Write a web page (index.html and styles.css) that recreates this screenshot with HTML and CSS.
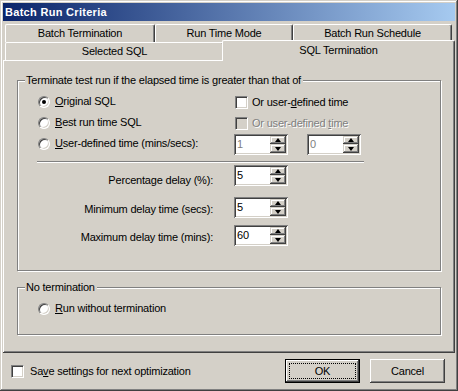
FILE: index.html
```html
<!DOCTYPE html>
<html>
<head>
<meta charset="utf-8">
<title>Batch Run Criteria</title>
<link rel="stylesheet" href="styles.css">
</head>
<body>
<div class="window">
  <div class="titlebar">Batch Run Criteria</div>
  <div class="tabs">
    <div class="tabrow">
      <div class="tab t-batch">Batch Termination</div>
      <div class="tab t-mode">Run Time Mode</div>
      <div class="tab t-sched">Batch Run Schedule</div>
    </div>
    <div class="tabrow">
      <div class="tab t-sql">Selected SQL</div>
      <div class="tab t-term active">SQL Termination</div>
    </div>
  </div>
  <div class="panel">
    <div class="group g-term">
      <span class="group-title">Terminate test run if the elapsed time is greater than that of</span>
      <div class="opt-row">
        <div class="cell1"><span class="opt"><span class="radio checked"></span><span><u>O</u>riginal SQL</span></span></div>
        <div class="cell2"><span class="opt opt-c"><span class="check"></span><span>Or user-<u>d</u>efined time</span></span></div>
      </div>
      <div class="opt-row">
        <div class="cell1"><span class="opt"><span class="radio"></span><span><u>B</u>est run time SQL</span></span></div>
        <div class="cell2"><span class="opt opt-c"><span class="check disabled"></span><span class="dis">Or user-defined <u>t</u>ime</span></span></div>
      </div>
      <div class="opt-row">
        <div class="cell1"><span class="opt"><span class="radio"></span><span><u>U</u>ser-defined time (mins/secs):</span></span></div>
        <div class="cell2 spins">
          <div class="spin"><span class="spin-val dis-val">1</span><span class="spin-btns"><span class="spin-up"><i class="arrow-up"></i></span><span class="spin-down"><i class="arrow-down"></i></span></span></div>
          <div class="spin"><span class="spin-val dis-val">0</span><span class="spin-btns"><span class="spin-up"><i class="arrow-up"></i></span><span class="spin-down"><i class="arrow-down"></i></span></span></div>
        </div>
      </div>
      <div class="sep"></div>
      <div class="field f1">
        <span class="field-label fl1">Percentage delay (%):</span>
        <div class="spin"><span class="spin-val">5</span><span class="spin-btns"><span class="spin-up"><i class="arrow-up"></i></span><span class="spin-down"><i class="arrow-down"></i></span></span></div>
      </div>
      <div class="field f2">
        <span class="field-label">Minimum delay time (secs):</span>
        <div class="spin"><span class="spin-val">5</span><span class="spin-btns"><span class="spin-up"><i class="arrow-up"></i></span><span class="spin-down"><i class="arrow-down"></i></span></span></div>
      </div>
      <div class="field f3">
        <span class="field-label">Maximum delay time (mins):</span>
        <div class="spin"><span class="spin-val">60</span><span class="spin-btns"><span class="spin-up"><i class="arrow-up"></i></span><span class="spin-down"><i class="arrow-down"></i></span></span></div>
      </div>
    </div>
    <div class="group g-none">
      <span class="group-title">No termination</span>
      <div class="opt-row">
        <span class="opt"><span class="radio"></span><span><u>R</u>un without termination</span></span>
      </div>
    </div>
  </div>
  <div class="footer">
    <span class="opt opt-save"><span class="check"></span><span>Sa<u>v</u>e settings for next optimization</span></span>
    <div class="buttons">
      <button class="btn default"><span class="focus">OK</span></button>
      <button class="btn">Cancel</button>
    </div>
  </div>
</div>
</body>
</html>
```
FILE: styles.css
```css
* { box-sizing: border-box; }
html, body { margin: 0; padding: 0; }
body {
  background: #D4D0C8;
  font-family: "Liberation Sans", Arial, sans-serif;
  font-size: 11px;
  color: #000;
  letter-spacing: -0.2px;
}
u { text-decoration: underline; text-underline-offset: 1px; }

.window {
  width: 458px;
  height: 391px;
  padding: 3px;
  display: flex;
  flex-direction: column;
  background: #D4D0C8;
  box-shadow: inset -1px -1px #404040, inset 1px 1px #D4D0C8, inset -2px -2px #808080, inset 2px 2px #fff;
}
.titlebar {
  height: 18px;
  flex: none;
  background: linear-gradient(to right, #0A246A, #A6CAF0);
  color: #fff;
  font-weight: bold;
  line-height: 18px;
  padding-left: 2px;
  letter-spacing: 0.3px;
}

.tabs { margin-top: 3px; flex: none; }
.tabrow { display: flex; height: 18px; padding-left: 2px; }
.tab {
  height: 18px;
  line-height: 17px;
  text-align: center;
  white-space: nowrap;
  background: #D4D0C8;
  border-top: 1px solid #fff;
  border-left: 1px solid #fff;
  border-right: 1px solid #404040;
  border-radius: 2px 2px 0 0;
  box-shadow: inset -1px 0 #808080;
  flex: none;
}
.t-batch { width: 150px; }
.t-mode { width: 138px; }
.t-sched { width: 159px; }
.t-sql { width: 219px; }
.t-term { width: 233px; }
.tab.active {
  height: 21px;
  margin-top: -2px;
  margin-left: -2px;
  line-height: 19px;
  position: relative;
  z-index: 1;
}

.panel {
  height: 293px;
  flex: none;
  padding: 2px;
  box-shadow: inset -1px -1px #404040, inset 1px 1px #fff, inset -2px -2px #808080;
}

.group {
  position: relative;
  margin-left: 12px;
  width: 424px;
  border: 1px solid #808080;
  box-shadow: inset 1px 1px #fff, 1px 1px #fff;
}
.g-term { margin-top: 18px; height: 191px; padding: 11px 0 0 20px; }
.g-none { margin-top: 16px; height: 48px; padding: 10px 0 0 20px; }
.group-title {
  position: absolute;
  top: -7px;
  left: 7px;
  padding: 0 2px 0 1px;
  background: #D4D0C8;
  line-height: 13px;
  white-space: nowrap;
}

.opt-row { display: flex; align-items: center; height: 21px; }
.cell1 { width: 196px; flex: none; }
.cell2 { display: flex; align-items: center; }
.spins { gap: 19px; }
.opt { display: inline-flex; align-items: center; gap: 5px; line-height: 13px; white-space: nowrap; }
.opt-c { margin-left: 1px; gap: 4px; }
.dis { color: #808080; text-shadow: 1px 1px #fff; }

.radio {
  position: relative;
  flex: none;
  width: 12px;
  height: 12px;
  border-radius: 50%;
  background: #fff;
  border: 1px solid;
  border-color: #808080 #fff #fff #808080;
  box-shadow: inset 1px 1px #404040, inset -1px -1px #D4D0C8;
}
.radio.checked::after {
  content: "";
  position: absolute;
  left: 3px;
  top: 3px;
  width: 4px;
  height: 4px;
  border-radius: 50%;
  background: #000;
}
.check {
  flex: none;
  width: 13px;
  height: 13px;
  background: #fff;
  border: 1px solid;
  border-color: #808080 #fff #fff #808080;
  box-shadow: inset 1px 1px #404040, inset -1px -1px #D4D0C8;
}
.check.disabled { background: #D4D0C8; }

.sep {
  margin: 6px 0 0 -1px;
  width: 327px;
  height: 2px;
  border-top: 1px solid #808080;
  border-bottom: 1px solid #fff;
}

.field { display: flex; height: 21px; }
.f1 { margin-top: 2px; }
.f2 { margin-top: 11px; }
.f3 { margin-top: 7px; }
.field-label {
  width: 175px;
  margin-right: 21px;
  text-align: right;
  line-height: 13px;
  padding-top: 6px;
  white-space: nowrap;
}
.field-label.fl1 { padding-top: 9px; }

.spin {
  display: flex;
  width: 54px;
  height: 21px;
  padding: 2px;
  background: #fff;
  box-shadow: inset 1px 1px #808080, inset -1px -1px #fff, inset 2px 2px #404040, inset -2px -2px #D4D0C8;
}
.spin-val { flex: 1; line-height: 17px; padding-left: 1px; }
.dis-val { color: #808080; }
.spin-btns { width: 16px; display: flex; flex-direction: column; }
.spin-up, .spin-down {
  display: flex;
  align-items: center;
  justify-content: center;
  background: #D4D0C8;
  box-shadow: inset -1px -1px #404040, inset 1px 1px #D4D0C8, inset -2px -2px #808080, inset 2px 2px #fff;
}
.spin-up { height: 8px; }
.spin-down { height: 9px; }
.arrow-up, .arrow-down {
  display: block;
  width: 1px;
  height: 0;
  border-left: 3px solid transparent;
  border-right: 3px solid transparent;
}
.arrow-up { border-bottom: 4px solid #000; }
.arrow-down { border-top: 4px solid #000; }

.footer {
  flex: 1;
  display: flex;
  align-items: center;
  justify-content: space-between;
  padding: 1px 10px 0 8px;
}
.opt-save { gap: 6px; }
.buttons { display: flex; gap: 10px; }
.btn {
  width: 75px;
  height: 24px;
  padding: 0;
  font: inherit;
  letter-spacing: inherit;
  color: #000;
  background: #D4D0C8;
  border: none;
  box-shadow: inset -1px -1px #404040, inset 1px 1px #fff, inset -2px -2px #808080, inset 2px 2px #D4D0C8;
}
.btn.default { border: 1px solid #000; padding: 3px; }
.focus {
  display: block;
  height: 16px;
  line-height: 14px;
  border: 1px dotted #000;
}
```
